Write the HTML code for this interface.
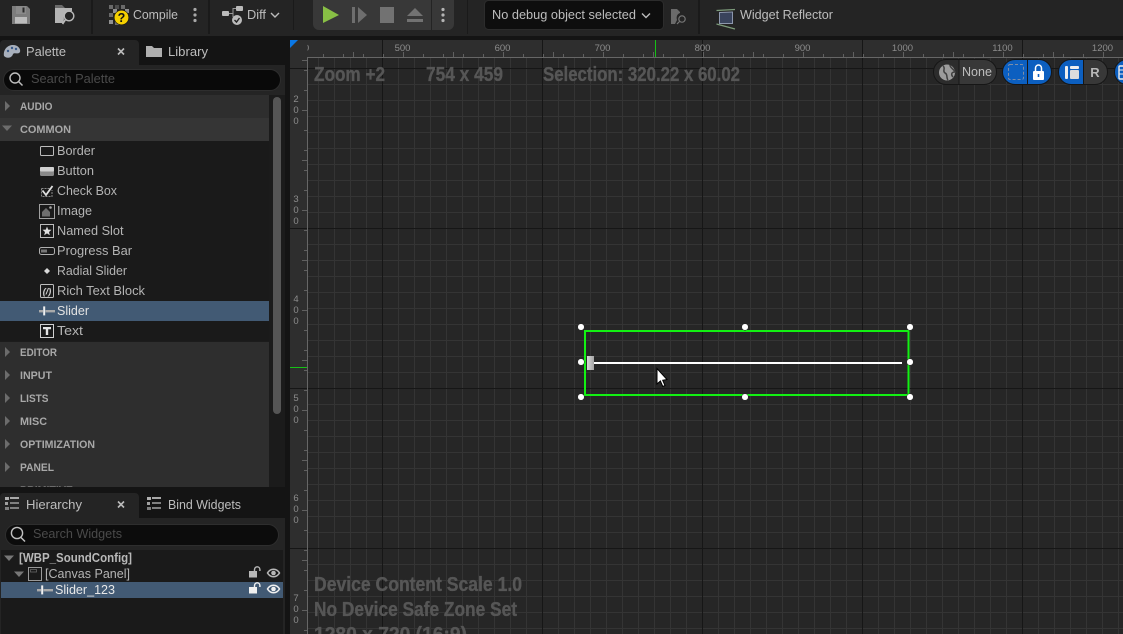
<!DOCTYPE html>
<html><head><meta charset="utf-8"><title>Widget Blueprint</title>
<style>
html,body{margin:0;padding:0;background:#141414;width:1123px;height:634px;overflow:hidden}
svg{display:block;font-family:"Liberation Sans",sans-serif}
.it{font-size:12.5px;fill:#b4b4b4}
.cat{font-size:11px;font-weight:bold;fill:#a8a8a8}
.tb{font-size:12.5px;fill:#bdbdbd}
.ov{font-size:20px;font-weight:bold;fill:#565656;stroke:#565656;stroke-width:.35px}
.rl{font-size:9.5px;fill:#8c8c8c}
.ph{font-size:12.5px;fill:#4a4a4a}
</style></head><body>
<svg width="1123" height="634" viewBox="0 0 1123 634" xmlns="http://www.w3.org/2000/svg">
<defs>
<pattern id="fv" patternUnits="userSpaceOnUse" x="318" y="0" width="16" height="16"><rect width="1" height="16" fill="#343434"/></pattern>
<pattern id="fh" patternUnits="userSpaceOnUse" x="0" y="68" width="16" height="16"><rect width="16" height="1" fill="#343434"/></pattern>
<pattern id="dv" patternUnits="userSpaceOnUse" x="382" y="0" width="160" height="16"><rect width="1" height="16" fill="#161616"/></pattern>
<pattern id="dh" patternUnits="userSpaceOnUse" x="0" y="68" width="16" height="160"><rect width="16" height="1" fill="#161616"/></pattern>
<pattern id="tt1" patternUnits="userSpaceOnUse" x="303" y="54" width="20" height="3"><rect width="1" height="3" fill="#606060"/></pattern>
<pattern id="tt2" patternUnits="userSpaceOnUse" x="353" y="52" width="50" height="5"><rect width="1" height="5" fill="#606060"/></pattern>
<pattern id="lt1" patternUnits="userSpaceOnUse" x="304" y="70" width="3" height="20"><rect width="3" height="1" fill="#606060"/></pattern>
<pattern id="lt2" patternUnits="userSpaceOnUse" x="302" y="60" width="5" height="50"><rect width="5" height="1" fill="#606060"/></pattern>
<clipPath id="pc"><rect x="0" y="341" width="269" height="146"/></clipPath>
<clipPath id="zc"><rect x="307.5" y="40" width="10" height="17"/></clipPath>
<g id="sl"><rect x="0" y="0" width="4" height="2.4" fill="#aaa"/><rect x="6.5" y="0" width="9.5" height="2.4" fill="#aaa"/><rect x="4.2" y="-3.6" width="2" height="9" fill="#f0f0f0"/></g>
<g id="lines"><rect x="0" y="0" width="4" height="3" fill="#b0b0b0"/><rect x="5" y="0" width="9" height="2" fill="#a8a8a8"/><rect x="0" y="5" width="3" height="3" fill="#a0a0a0"/><rect x="5" y="5" width="9" height="2" fill="#808080"/><rect x="0" y="10" width="4" height="3" fill="#808080"/><rect x="5" y="10" width="9" height="2" fill="#808080"/></g>
<g id="eye"><path d="M0 4.5C3 -.5 9 -.5 12 4.5C9 9.5 3 9.5 0 4.5Z" fill="none" stroke="currentColor" stroke-width="1.5"/><circle cx="6" cy="4.5" r="2.3" fill="currentColor"/></g>
<g id="lock"><rect x="0" y="4" width="8" height="6.5" fill="currentColor"/><path d="M5.5 4.5V2.5a2.7 2.7 0 0 1 5.4 0V4" fill="none" stroke="currentColor" stroke-width="1.4"/></g>
<linearGradient id="th" x1="0" x2="1" y1="0" y2="0"><stop offset="0" stop-color="#d8d8d8"/><stop offset="1" stop-color="#a4a4a4"/></linearGradient>
</defs>

<!-- base -->
<rect width="1123" height="634" fill="#141414"/>

<!-- toolbar -->
<rect width="1123" height="36" fill="#242424"/>
<rect x="91" width="2" height="34" fill="#1a1a1a"/>
<rect x="208" width="2" height="34" fill="#1a1a1a"/>
<rect x="293" width="1" height="30" fill="#1a1a1a"/>
<rect x="467" width="1" height="34" fill="#1a1a1a"/>
<rect x="698" width="2" height="34" fill="#1a1a1a"/>

<!-- save -->
<path d="M12 6H27L30 9V24H12Z" fill="#7c7c7c"/><rect x="16" y="6" width="10" height="8" fill="#8a8a8a"/><rect x="22.5" y="7.5" width="2" height="5" fill="#2a2a2a"/><rect x="15" y="17" width="12" height="6.5" fill="#bcbcbc"/>
<!-- browse folder -->
<path d="M55 8H72V11C67 11 63 14 64 19L63 23H55Z" fill="#b4b4b4"/><path d="M55 8V5H62L65 8Z" fill="#6a6a6a"/><circle cx="69" cy="16" r="4.8" fill="#242424" stroke="#b8b8b8" stroke-width="1.4"/><path d="M65.5 19.5L62.5 24" stroke="#b8b8b8" stroke-width="1.7"/>
<!-- compile -->
<g fill="#6a6a6a"><rect x="109" y="5" width="4" height="4"/><rect x="115" y="5" width="4" height="4" fill="#4c4c4c"/><rect x="121" y="5" width="4" height="4"/><rect x="125" y="9" width="4" height="4" fill="#909090"/><rect x="113" y="9" width="4" height="4" fill="#909090"/><rect x="109" y="13" width="4" height="4"/><rect x="109" y="20" width="4" height="4" fill="#909090"/><rect x="115" y="21" width="4" height="4"/></g>
<circle cx="121.5" cy="17.5" r="7.3" fill="#f5d000" stroke="#111" stroke-width=".6"/><text x="121.5" y="22" text-anchor="middle" font-size="12.5" font-weight="bold" fill="#111">?</text>
<text x="133" y="19" class="tb" textLength="45" lengthAdjust="spacingAndGlyphs">Compile</text>
<g fill="#a8a8a8"><circle cx="195" cy="9.5" r="1.6"/><circle cx="195" cy="15" r="1.6"/><circle cx="195" cy="20.5" r="1.6"/></g>
<!-- diff -->
<rect x="222" y="11" width="7" height="5" rx="1" fill="#bbb"/><rect x="236" y="6" width="7" height="5" rx="1" fill="#bbb"/><path d="M229 13.5H233V8.5H236M233 13.5V17" stroke="#999" fill="none"/><circle cx="237" cy="20" r="5" fill="#bbb"/><path d="M234.5 20L236.5 22L239.5 18" stroke="#222" stroke-width="1.4" fill="none"/>
<text x="247" y="19" class="tb" textLength="19" lengthAdjust="spacingAndGlyphs">Diff</text>
<path d="M271 13L275 17L279 13" stroke="#bbb" stroke-width="1.4" fill="none"/>
<!-- play group -->
<path d="M313 0H454V24a6 6 0 0 1-6 6H319a6 6 0 0 1-6-6Z" fill="#383838"/>
<rect x="431" y="0" width="1" height="30" fill="#242424"/>
<path d="M323 6L339 15L323 23Z" fill="#88bf45"/>
<rect x="352" y="7" width="3" height="16" fill="#6e6e6e"/><path d="M358 7L367 15L358 23Z" fill="#6e6e6e"/>
<rect x="380" y="7" width="14" height="16" fill="#727272"/>
<path d="M415 8L423 16H407Z" fill="#727272"/><rect x="407" y="19" width="16" height="3" fill="#727272"/>
<g fill="#b4b4b4"><circle cx="443" cy="9.5" r="1.6"/><circle cx="443" cy="15" r="1.6"/><circle cx="443" cy="20.5" r="1.6"/></g>
<!-- debug -->
<rect x="484.5" y="0.5" width="179" height="29" rx="4" fill="#0e0e0e" stroke="#2c2c2c"/>
<text x="492" y="19" class="tb" textLength="144" lengthAdjust="spacingAndGlyphs">No debug object selected</text>
<path d="M642 13.5L646 17.5L650 13.5" stroke="#bbb" stroke-width="1.4" fill="none"/>
<path d="M671 12V9H677L680 12V13C677 14 676 17 677 20L675 24H671Z" fill="#6a6a6a"/><circle cx="682" cy="19" r="3.2" fill="none" stroke="#777" stroke-width="1.2"/><path d="M679.5 21.5L677 24" stroke="#777" stroke-width="1.2"/>
<!-- widget reflector -->
<path d="M719 12L733 11.5V24L719 24Z" fill="#8d97ad"/><path d="M720 13L732 12.5V23L720 23Z" fill="#39435c"/><path d="M716.5 10.5L735 9.5M716.5 24L735 29" stroke="#7c9a7a" stroke-width="1.2" fill="none"/>
<text x="740" y="19" class="tb" textLength="93" lengthAdjust="spacingAndGlyphs">Widget Reflector</text>

<!-- palette panel -->
<rect x="0" y="65" width="285" height="422" fill="#242424"/>
<path d="M0 65V44a4 4 0 0 1 4-4H135a4 4 0 0 1 4 4V65Z" fill="#242424"/>
<!-- palette icon -->
<path d="M4 56C3 49 8 45 13 45C18 45 21 49 20 52C18 55 15 52 13 54C12 58 7 59 4 56Z" fill="#a8b0bc"/><circle cx="8" cy="51" r="1.2" fill="#3a5a88"/><circle cx="12" cy="48" r="1.2" fill="#3a5a88"/><circle cx="16" cy="49" r="1.2" fill="#3a5a88"/>
<text x="26" y="56" class="tb" textLength="40" lengthAdjust="spacingAndGlyphs">Palette</text>
<path d="M118 48.5L124 54.5M124 48.5L118 54.5" stroke="#bbb" stroke-width="1.6"/>
<path d="M146 46H152L154 48H162V57H146Z" fill="#b0b0b0"/>
<text x="168" y="56" class="tb" textLength="40" lengthAdjust="spacingAndGlyphs">Library</text>
<rect x="3.5" y="69.5" width="277" height="21" rx="10.5" fill="#090909" stroke="#2e2e2e"/>
<circle cx="15" cy="78" r="5" fill="none" stroke="#bdbdbd" stroke-width="1.4"/><path d="M18.5 81.5L22.5 85.5" stroke="#bdbdbd" stroke-width="1.5"/>
<text x="31" y="83" class="ph" textLength="84" lengthAdjust="spacingAndGlyphs">Search Palette</text>

<!-- scroll -->
<rect x="269" y="95" width="16" height="392" fill="#1b1b1b"/>
<rect x="273" y="97" width="8" height="317" rx="4" fill="#555"/>

<!-- list rows -->
<rect x="0" y="95" width="269" height="23" fill="#2e2e2e"/>
<rect x="0" y="118" width="269" height="23" fill="#353535"/>
<rect x="0" y="141" width="269" height="200" fill="#1a1a1a"/>
<rect x="0" y="301" width="269" height="20" fill="#425a74"/>
<rect x="0" y="341" width="269" height="146" fill="#2e2e2e"/>
<rect x="0" y="341" width="269" height="1" fill="#1c1c1c"/>

<g fill="#6c6c6c">
<path d="M5 101L10 106L5 111Z"/>
<path d="M2 125.5H12L7 131Z"/>
<path d="M5 347L10 352L5 357Z"/><path d="M5 370L10 375L5 380Z"/><path d="M5 393L10 398L5 403Z"/><path d="M5 416L10 421L5 426Z"/><path d="M5 439L10 444L5 449Z"/><path d="M5 462L10 467L5 472Z"/>
</g>
<text x="20" y="110" class="cat" textLength="32.5" lengthAdjust="spacingAndGlyphs">AUDIO</text>
<text x="20" y="133" class="cat" textLength="51" lengthAdjust="spacingAndGlyphs">COMMON</text>
<text x="20" y="356" class="cat" textLength="37" lengthAdjust="spacingAndGlyphs">EDITOR</text>
<text x="20" y="379" class="cat" textLength="32" lengthAdjust="spacingAndGlyphs">INPUT</text>
<text x="20" y="402" class="cat" textLength="28.5" lengthAdjust="spacingAndGlyphs">LISTS</text>
<text x="20" y="425" class="cat" textLength="27" lengthAdjust="spacingAndGlyphs">MISC</text>
<text x="20" y="448" class="cat" textLength="75" lengthAdjust="spacingAndGlyphs">OPTIMIZATION</text>
<text x="20" y="471" class="cat" textLength="34" lengthAdjust="spacingAndGlyphs">PANEL</text>
<g clip-path="url(#pc)"><text x="20" y="494" class="cat" textLength="53" lengthAdjust="spacingAndGlyphs">PRIMITIVE</text></g>

<text x="57" y="155" class="it" textLength="38" lengthAdjust="spacingAndGlyphs">Border</text>
<text x="57" y="175" class="it" textLength="37" lengthAdjust="spacingAndGlyphs">Button</text>
<text x="57" y="195" class="it" textLength="60" lengthAdjust="spacingAndGlyphs">Check Box</text>
<text x="57" y="215" class="it" textLength="35" lengthAdjust="spacingAndGlyphs">Image</text>
<text x="57" y="235" class="it" textLength="66.5" lengthAdjust="spacingAndGlyphs">Named Slot</text>
<text x="57" y="255" class="it" textLength="75" lengthAdjust="spacingAndGlyphs">Progress Bar</text>
<text x="57" y="275" class="it" textLength="70" lengthAdjust="spacingAndGlyphs">Radial Slider</text>
<text x="57" y="295" class="it" textLength="88" lengthAdjust="spacingAndGlyphs">Rich Text Block</text>
<text x="57" y="315" class="it" style="fill:#e2e2e2" textLength="32" lengthAdjust="spacingAndGlyphs">Slider</text>
<text x="57" y="335" class="it" textLength="26" lengthAdjust="spacingAndGlyphs">Text</text>

<!-- palette item icons -->
<rect x="40.5" y="146.5" width="13" height="9" rx="1" fill="none" stroke="#bcbcbc"/>
<rect x="40" y="167" width="14" height="9" rx="1.5" fill="#8a8a8a"/><rect x="40" y="167" width="14" height="4.5" rx="1" fill="#d0d0d0"/>
<path d="M41.5 188.5H50M41.5 188.5V196.5H52V190" fill="none" stroke="#8a8a8a" stroke-dasharray="2 1"/><path d="M42.5 190.5L46 195L52.5 186" fill="none" stroke="#e0e0e0" stroke-width="1.8"/>
<rect x="39.5" y="204.5" width="15" height="14" fill="none" stroke="#a0a0a0"/><path d="M42 212L46 208L50 212V216.5H42Z" fill="#6e6e6e"/><circle cx="50.5" cy="207.5" r="1.3" fill="#aaa"/>
<rect x="40.5" y="224.5" width="13" height="13" fill="none" stroke="#bcbcbc"/><path d="M47 226.5L48.2 229.6L51.5 229.8L49 232L49.8 235.2L47 233.4L44.2 235.2L45 232L42.5 229.8L45.8 229.6Z" fill="#e0e0e0"/>
<rect x="39.5" y="247.5" width="15" height="7" rx="2" fill="none" stroke="#b0b0b0"/><rect x="41" y="249.5" width="6" height="3" fill="#777"/>
<path d="M47 268L50 271L47 274L44 271Z" fill="#d8d8d8"/>
<rect x="40.5" y="284.5" width="13" height="13" rx="1" fill="none" stroke="#bcbcbc"/><text x="47" y="294.5" text-anchor="middle" font-size="9" font-weight="bold" font-style="italic" fill="#d0d0d0">(/)</text>
<use href="#sl" x="39" y="310"/>
<rect x="40.5" y="324.5" width="13" height="13" fill="none" stroke="#d0d0d0"/><path d="M43 327H51V329.2H48.2V335H45.8V329.2H43Z" fill="#e4e4e4"/>

<!-- hierarchy panel -->
<rect x="0" y="487" width="285" height="6" fill="#141414"/>
<rect x="0" y="518" width="285" height="116" fill="#242424"/>
<path d="M0 518V497a4 4 0 0 1 4-4H135a4 4 0 0 1 4 4V518Z" fill="#242424"/>
<use href="#lines" x="5" y="497"/>
<text x="26" y="509" class="tb" textLength="56" lengthAdjust="spacingAndGlyphs">Hierarchy</text>
<path d="M118 501.5L124 507.5M124 501.5L118 507.5" stroke="#bbb" stroke-width="1.6"/>
<use href="#lines" x="147" y="497"/>
<text x="168" y="509" class="tb" textLength="73" lengthAdjust="spacingAndGlyphs">Bind Widgets</text>
<rect x="5.5" y="524.5" width="273" height="21" rx="10.5" fill="#0c0c0c" stroke="#2e2e2e"/>
<circle cx="17" cy="533" r="5.6" fill="none" stroke="#c0c0c0" stroke-width="1.4"/><path d="M21 537.5L25 541.5" stroke="#c0c0c0" stroke-width="1.5"/>
<text x="33" y="538" class="ph" textLength="89" lengthAdjust="spacingAndGlyphs">Search Widgets</text>

<rect x="1" y="550" width="282" height="84" fill="#1a1a1a"/>
<rect x="1" y="582" width="282" height="16" fill="#425a74"/>
<path d="M4 555.5H14L9 561Z" fill="#777"/>
<text x="19" y="562" font-size="12.5" font-weight="bold" fill="#b8b8b8" textLength="113" lengthAdjust="spacingAndGlyphs">[WBP_SoundConfig]</text>
<path d="M14 571.5H24L19 577Z" fill="#777"/>
<rect x="28.5" y="567.5" width="13" height="13" fill="none" stroke="#999"/><rect x="30.5" y="569.5" width="6" height="2.5" fill="none" stroke="#666" stroke-width=".8"/>
<text x="45" y="578" class="it" textLength="85" lengthAdjust="spacingAndGlyphs">[Canvas Panel]</text>
<use href="#sl" x="37" y="589"/>
<text x="55" y="594" class="it" style="fill:#e8e8e8" textLength="60" lengthAdjust="spacingAndGlyphs">Slider_123</text>
<g color="#b8b8b8"><use href="#lock" x="249" y="567"/><use href="#eye" x="267.5" y="568.5"/></g>
<g color="#f0f0f0"><use href="#lock" x="249" y="583"/><use href="#eye" x="267.5" y="584.5"/></g>

<!-- canvas -->
<rect x="290" y="40" width="833" height="594" fill="#262626"/>
<rect x="307" y="58" width="816" height="576" fill="url(#fv)"/>
<rect x="307" y="58" width="816" height="576" fill="url(#fh)"/>
<!-- rulers -->
<rect x="290" y="40" width="833" height="17" fill="#2e2e2e"/>
<rect x="290" y="40" width="17" height="594" fill="#2e2e2e"/>
<rect x="307" y="40" width="816" height="594" fill="url(#dv)"/>
<rect x="290" y="58" width="833" height="576" fill="url(#dh)"/>
<rect x="307" y="54" width="816" height="3" fill="url(#tt1)"/>
<rect x="307" y="52" width="816" height="5" fill="url(#tt2)"/>
<rect x="304" y="58" width="3" height="576" fill="url(#lt1)"/>
<rect x="302" y="58" width="5" height="576" fill="url(#lt2)"/>
<rect x="307" y="57" width="816" height="1" fill="#666"/>
<rect x="307" y="57" width="1" height="577" fill="#666"/>
<path d="M290 40H298L290 48Z" fill="#0a78e6"/>
<rect x="655" y="40" width="1" height="17" fill="#16c116"/>
<rect x="290" y="367" width="17" height="1" fill="#16c116"/>

<g text-anchor="middle">
<g clip-path="url(#zc)"><text x="306.5" y="51" class="rl">0</text></g>
<text x="402.5" y="51" class="rl">500</text><text x="502.5" y="51" class="rl">600</text><text x="602.5" y="51" class="rl">700</text><text x="702.5" y="51" class="rl">800</text><text x="802.5" y="51" class="rl">900</text><text x="902.5" y="51" class="rl">1000</text><text x="1002.5" y="51" class="rl">1100</text><text x="1102.5" y="51" class="rl">1200</text>
<text x="296" y="102" class="rl">2</text><text x="296" y="113" class="rl">0</text><text x="296" y="124" class="rl">0</text>
<text x="296" y="202" class="rl">3</text><text x="296" y="213" class="rl">0</text><text x="296" y="224" class="rl">0</text>
<text x="296" y="302" class="rl">4</text><text x="296" y="313" class="rl">0</text><text x="296" y="324" class="rl">0</text>
<text x="296" y="401" class="rl">5</text><text x="296" y="412" class="rl">0</text><text x="296" y="423" class="rl">0</text>
<text x="296" y="501" class="rl">6</text><text x="296" y="512" class="rl">0</text><text x="296" y="523" class="rl">0</text>
<text x="296" y="601" class="rl">7</text><text x="296" y="612" class="rl">0</text><text x="296" y="623" class="rl">0</text>
</g>

<!-- overlays -->
<text x="314" y="81" class="ov" textLength="71" lengthAdjust="spacingAndGlyphs">Zoom +2</text>
<text x="426" y="81" class="ov" textLength="77" lengthAdjust="spacingAndGlyphs">754 x 459</text>
<text x="543" y="81" class="ov" textLength="197" lengthAdjust="spacingAndGlyphs">Selection: 320.22 x 60.02</text>
<text x="314" y="591" class="ov" textLength="208" lengthAdjust="spacingAndGlyphs">Device Content Scale 1.0</text>
<text x="314" y="616" class="ov" textLength="203" lengthAdjust="spacingAndGlyphs">No Device Safe Zone Set</text>
<text x="314" y="641" class="ov" textLength="153" lengthAdjust="spacingAndGlyphs">1280 x 720 (16:9)</text>

<!-- canvas controls -->
<rect x="933.5" y="59.5" width="63" height="25" rx="12.5" fill="#383838"/>
<path d="M946 59.5a12.5 12.5 0 0 0 0 25H958.5V59.5Z" fill="#2c2c2c"/>
<rect x="933.5" y="59.5" width="63" height="25" rx="12.5" fill="none" stroke="#161616"/>
<rect x="958.5" y="60" width="1" height="24" fill="#161616"/>
<circle cx="947" cy="72.5" r="8" fill="#9c9c9c"/><path d="M943 66C946 68 942 71 945 73C948 74 946 78 948 80M950 65C950 68 954 69 955 72C951 72 951 75 953 77" fill="none" stroke="#404040" stroke-width="1.5"/>
<text x="962" y="76" class="tb" textLength="30" lengthAdjust="spacingAndGlyphs">None</text>

<rect x="1002.5" y="59.5" width="49" height="25" rx="12.5" fill="#0c5fc0" stroke="#161616"/>
<rect x="1027" y="60" width="1" height="24" fill="#161616"/>
<rect x="1008.5" y="64.5" width="15" height="15" rx="1.5" fill="none" stroke="#7d8ea8" stroke-dasharray="3 2"/>
<rect x="1033" y="71" width="11" height="9" rx="1" fill="#fff"/><path d="M1035.5 71V68a3 3 0 0 1 6 0V71" fill="none" stroke="#fff" stroke-width="1.5"/><rect x="1037.7" y="74" width="1.6" height="3" fill="#0c5fc0"/>

<rect x="1058.5" y="59.5" width="49" height="25" rx="12.5" fill="#383838"/>
<path d="M1071 59.5a12.5 12.5 0 0 0 0 25H1083V59.5Z" fill="#0c5fc0"/>
<rect x="1058.5" y="59.5" width="49" height="25" rx="12.5" fill="none" stroke="#161616"/>
<rect x="1083" y="60" width="1" height="24" fill="#161616"/>
<rect x="1065" y="66" width="3" height="13" rx="1" fill="#eee"/><rect x="1070" y="66" width="9" height="3" rx="1" fill="#eee"/><rect x="1070" y="70" width="9" height="9" rx="1" fill="#ddd"/>
<text x="1095" y="77" text-anchor="middle" font-size="13" font-weight="bold" fill="#b8b8b8">R</text>
<rect x="1114.5" y="59.5" width="30" height="25" rx="12.5" fill="#0c5fc0" stroke="#161616"/>
<rect x="1119" y="66" width="10" height="13" rx="1" fill="none" stroke="#eee" stroke-width="1.4"/><path d="M1119 70H1129M1119 74H1129" stroke="#eee"/>

<!-- selection -->
<rect x="585" y="331" width="323.5" height="64" fill="none" stroke="#12f012" stroke-width="2"/>
<rect x="594" y="362" width="308" height="2" fill="#fff"/>
<rect x="587" y="356" width="7" height="14" fill="url(#th)"/>
<g fill="#fff" stroke="#222" stroke-width=".5">
<circle cx="581" cy="327" r="3.3"/><circle cx="745" cy="327" r="3.3"/><circle cx="910" cy="327" r="3.3"/>
<circle cx="581" cy="362" r="3.3"/><circle cx="910" cy="362" r="3.3"/>
<circle cx="581" cy="397" r="3.3"/><circle cx="745" cy="397" r="3.3"/><circle cx="910" cy="397" r="3.3"/>
</g>
<!-- cursor -->
<path d="M657 368.5V384L660.4 381L662.8 386.5L665 385.5L662.7 380.3L667 379.5Z" fill="#fff" stroke="#000" stroke-width="1"/>
</svg>
</body></html>
